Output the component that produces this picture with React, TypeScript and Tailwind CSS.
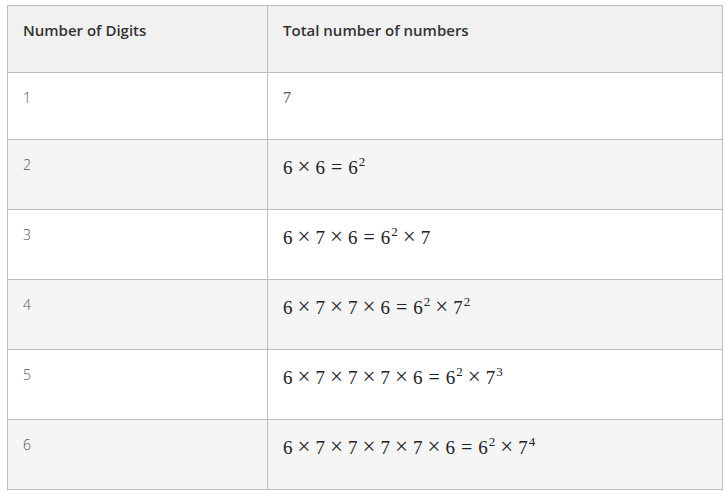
type Term = { base: string; exp?: string };

const rows: { n: string; lhs?: string[]; rhs?: Term[]; plain?: string }[] = [
  { n: "1", plain: "7" },
  { n: "2", lhs: ["6", "6"], rhs: [{ base: "6", exp: "2" }] },
  { n: "3", lhs: ["6", "7", "6"], rhs: [{ base: "6", exp: "2" }, { base: "7" }] },
  { n: "4", lhs: ["6", "7", "7", "6"], rhs: [{ base: "6", exp: "2" }, { base: "7", exp: "2" }] },
  { n: "5", lhs: ["6", "7", "7", "7", "6"], rhs: [{ base: "6", exp: "2" }, { base: "7", exp: "3" }] },
  { n: "6", lhs: ["6", "7", "7", "7", "7", "6"], rhs: [{ base: "6", exp: "2" }, { base: "7", exp: "4" }] },
];

function Times() {
  return <span className="mx-[5px] text-[23px] leading-[0]">×</span>;
}

function Expr({ lhs, rhs }: { lhs: string[]; rhs: Term[] }) {
  return (
    <span className="font-['Liberation_Serif',serif] text-[19px] text-[#222] whitespace-nowrap">
      {lhs.map((d, i) => (
        <span key={"l" + i}>
          {i > 0 && <Times />}
          {d}
        </span>
      ))}
      <span className="mx-[6px] text-[20px] leading-[0]">=</span>
      {rhs.map((t, i) => (
        <span key={"r" + i}>
          {i > 0 && <Times />}
          {t.base}
          {t.exp && <sup className="text-[13px] ml-[1px] relative -top-[8px] align-baseline">{t.exp}</sup>}
        </span>
      ))}
    </span>
  );
}

export default function App() {
  return (
    <div className="bg-white w-[727px] h-[492px] pt-[5px] pl-[7px]">
      <table className="border-collapse w-[716px] font-['Open_Sans',sans-serif]">
        <thead>
          <tr className="bg-[#f1f1f1] h-[67px]">
            <th className="w-[260px] border border-[#bcbcbc] align-top text-left pt-[13px] pl-[15px] text-[15px] font-semibold text-[#333]">
              Number of Digits
            </th>
            <th className="border border-[#bcbcbc] align-top text-left pt-[13px] pl-[15px] text-[15px] font-semibold text-[#333]">
              Total number of numbers
            </th>
          </tr>
        </thead>
        <tbody>
          {rows.map((r, i) => (
            <tr key={r.n} className={(i % 2 === 1 ? "bg-[#f5f5f5]" : "bg-white") + (i === 0 ? " h-[67px]" : " h-[70px]")}>
              <td className="border border-[#bcbcbc] align-top pt-[14px] pl-[15px] text-[14px] font-light text-[#555]">
                {r.n}
              </td>
              <td className="border border-[#bcbcbc] align-top pl-[15px] pt-[14px]">
                {r.plain ? (
                  <span className="font-['Liberation_Serif',serif] text-[16px] text-[#555] relative -top-[2px]">{r.plain}</span>
                ) : (
                  <Expr lhs={r.lhs!} rhs={r.rhs!} />
                )}
              </td>
            </tr>
          ))}
        </tbody>
      </table>
    </div>
  );
}
